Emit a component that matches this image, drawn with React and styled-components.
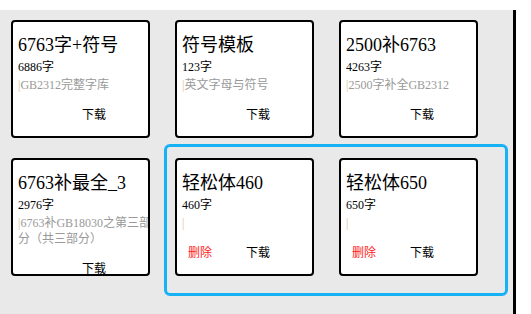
import React from "react";
import styled, { createGlobalStyle } from "styled-components";

const GlobalStyle = createGlobalStyle`
  html, body {
    margin: 0;
    padding: 0;
    background: #fff;
  }
  body {
    font-family: "Liberation Serif", "Noto Sans CJK SC", serif;
  }
`;

const fonts = [
  { id: 1, title: "6763字+符号", count: 6886, desc: "GB2312完整字库" },
  { id: 2, title: "符号模板", count: 123, desc: "英文字母与符号" },
  { id: 3, title: "2500补6763", count: 4263, desc: "2500字补全GB2312" },
  { id: 4, title: "6763补最全_3", count: 2976, desc: "6763补GB18030之第三部分（共三部分）" },
];

/* 自定义字库，可删除 */
const custom = [
  { id: 5, title: "轻松体460", count: 460, desc: "" },
  { id: 6, title: "轻松体650", count: 650, desc: "" },
];

const FontCard = ({ item, removable }) => (
  <Card>
    <Title>{item.title}</Title>
    <Count>{item.count}字</Count>
    <Desc>
      <Pipe>|</Pipe>
      {item.desc}
    </Desc>
    <Actions>
      <ActionBtn $danger $off={!removable}>删除</ActionBtn>
      <ActionBtn>下载</ActionBtn>
    </Actions>
  </Card>
);

const App = () => {
  return (
    <>
      <GlobalStyle />
      <Page>
        <Panel>
          <Grid>
            {fonts.map((f) => (
              <FontCard key={f.id} item={f} />
            ))}
            <Group>
              <Selection />
              {custom.map((f) => (
                <FontCard key={f.id} item={f} removable />
              ))}
            </Group>
          </Grid>
        </Panel>
      </Page>
    </>
  );
};

export default App;

const Page = styled.div`
  padding-top: 10px;
  width: 531px;
  height: 304px;
`;

const Panel = styled.div`
  width: 516px;
  height: 304px;
  background: #e9e9e9;
  border-right: 3px solid #000;
  padding: 10px 0 0 11px;
  box-sizing: border-box;
  overflow: hidden;
`;

const Grid = styled.div`
  display: grid;
  grid-template-columns: repeat(3, 139px);
  column-gap: 25px;
  row-gap: 20px;
`;

const Group = styled.div`
  grid-column: span 2;
  display: grid;
  grid-template-columns: repeat(2, 139px);
  column-gap: 25px;
  position: relative;
`;

const Selection = styled.div`
  position: absolute;
  top: -14px;
  left: -11px;
  right: -30px;
  bottom: -20px;
  border: 3px solid #17b2f6;
  border-radius: 6px;
  pointer-events: none;
`;

const Card = styled.div`
  box-sizing: border-box;
  width: 139px;
  height: 118px;
  background: #fff;
  border: 2px solid #000;
  border-radius: 4px;
  padding: 12px 0 0 5px;
  overflow: hidden;
`;

const Title = styled.div`
  font-size: 18px;
  line-height: 22px;
  color: #000;
  white-space: nowrap;
`;

const Count = styled.div`
  margin-top: 3px;
  font-size: 12px;
  line-height: 16px;
  color: #000;
`;

const Desc = styled.div`
  margin-top: 2px;
  width: 134px;
  font-size: 12px;
  line-height: 16px;
  color: #999;
`;

const Pipe = styled.span`
  color: #dcbd9c;
`;

const Actions = styled.div`
  display: flex;
  gap: 34px;
  margin-top: 13px;
  padding-left: 6px;
  font-family: "Noto Sans CJK SC", sans-serif;
  font-size: 12px;
  line-height: 16px;
`;

const ActionBtn = styled.span`
  color: ${({ $danger }) => ($danger ? "#ff1a1a" : "#000")};
  visibility: ${({ $off }) => ($off ? "hidden" : "visible")};
`;
